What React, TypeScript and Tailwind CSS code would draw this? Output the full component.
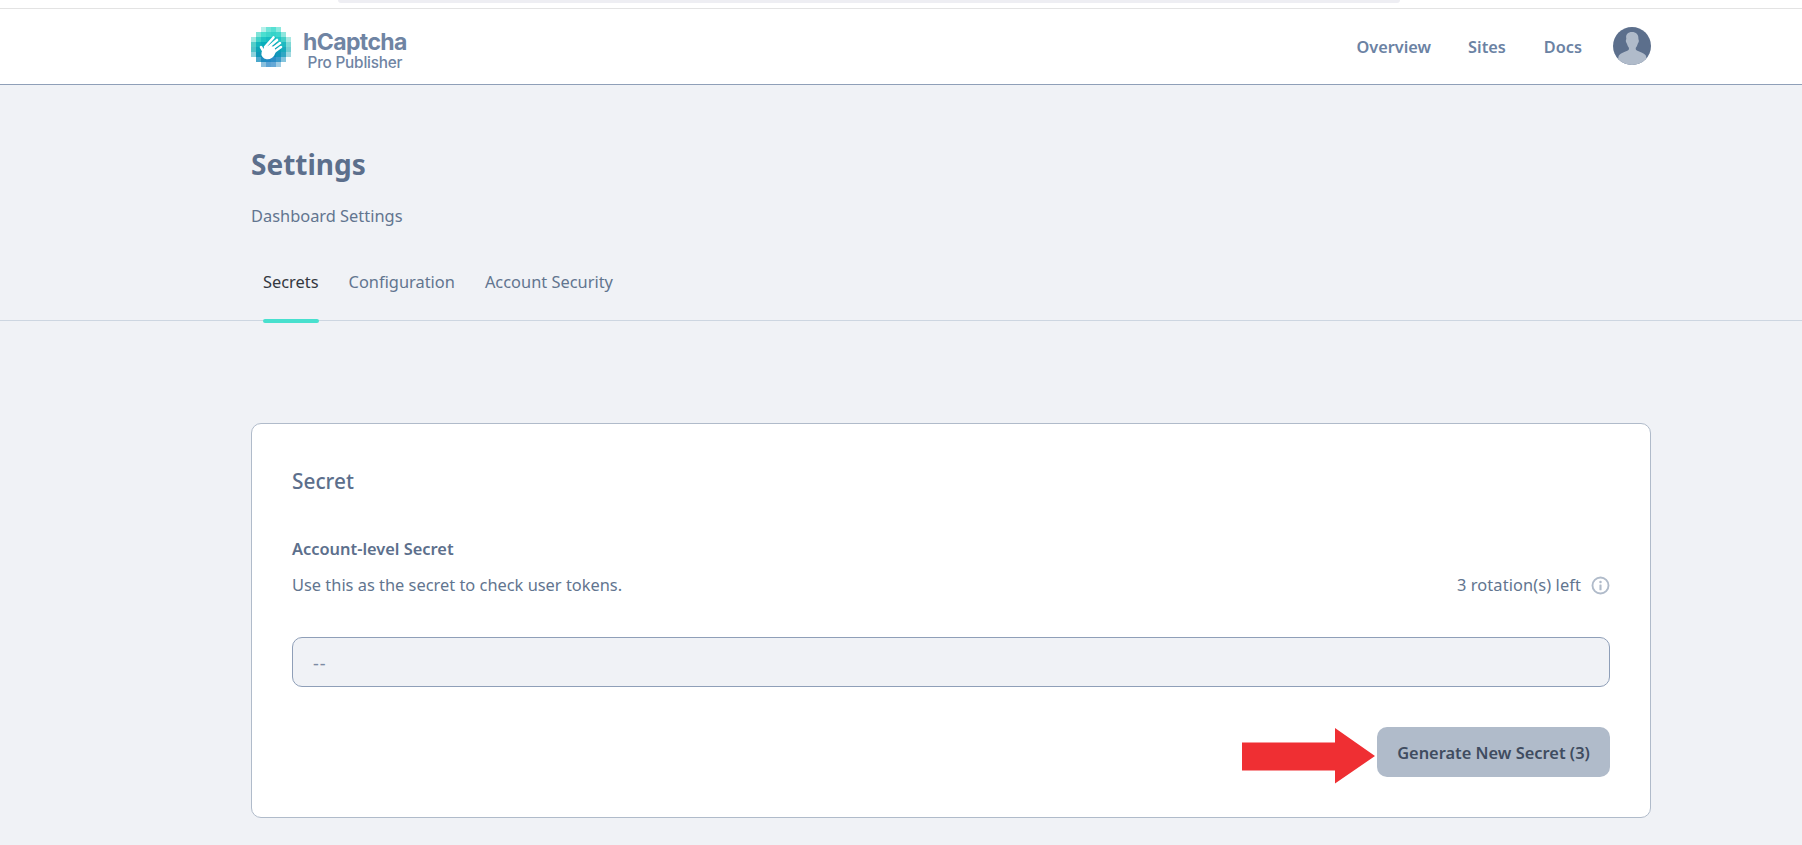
const logoRows: (string | null)[][] = [
  [null, null, "#b5f0ea", "#6fe4d8", "#56e0d3", "#8be9df", null, null],
  [null, "#7fe3d8", "#4adfd0", "#3ed7cb", "#35d3c9", "#3ed6cc", "#8fe6de", null],
  ["#a3e8e2", "#3fd2c8", "#20c4c4", "#16bdc2", "#16bcc2", "#22c6c6", "#46d0c9", "#a9e8e3"],
  ["#55cdc9", "#13b5be", "#08aebb", "#08aabb", "#0aa9bb", "#10b0bd", "#1fb9c1", "#7ed8d6"],
  ["#52c2c8", "#0ca5b7", "#07a0b6", "#069cb5", "#079bb5", "#0ba0b7", "#18aabc", "#71cdd2"],
  ["#8fd2dc", "#1198b8", "#0792b5", "#078eb6", "#0a8eb8", "#1397bb", "#30a6c3", "#a0d8e0"],
  [null, "#4ba8cc", "#1f8cc0", "#2289c4", "#2b8dc6", "#3b9bcb", "#84c4dd", null],
  [null, null, "#8ac0de", "#5ba3d4", "#65a8d6", "#a0cce3", null, null],
];

function Logo() {
  return (
    <svg width="40" height="40" viewBox="0 0 40 40" className="shrink-0">
      {logoRows.map((row, y) =>
        row.map((fill, x) =>
          fill ? <rect key={`${x}-${y}`} x={x * 5} y={y * 5} width="5" height="5" fill={fill} /> : null
        )
      )}
      <g stroke="#fff" strokeWidth="2.600" strokeLinecap="round" fill="none">
        <path d="M14 20l8.500-9.500" />
        <path d="M16.500 21l9.500-8" />
        <path d="M19 23.500l10-7.500" />
        <path d="M21 26.500l9-6.500" />
        <path d="M13.500 26l-3.500-6" />
      </g>
      <ellipse cx="17.500" cy="25.500" rx="7.500" ry="6.300" fill="#fff" transform="rotate(-35 17.500 25.500)" />
    </svg>
  );
}

function Avatar() {
  return (
    <svg width="38" height="38" viewBox="0 0 38 38" className="shrink-0">
      <defs>
        <clipPath id="avatar-clip">
          <circle cx="19" cy="19" r="19" />
        </clipPath>
      </defs>
      <g clipPath="url(#avatar-clip)">
        <rect width="38" height="38" fill="#5c6f8c" />
        <path
          fill="#b0bbca"
          d="M19 5c4 0 6.600 2.400 6.400 6.600 0 1.200.7 1.500.4 3-.3 1.300-.9 1.600-1.200 2.600-.4 1.500-1 2.700-1.800 3.600-.3 1.600.2 2.400 1.600 3 3.300 1.400 6.400 2.400 8 4.200 1 1.100 1.300 3.500 1.300 10H5c0-6.500.3-8.900 1.300-10 1.600-1.800 4.700-2.800 8-4.200 1.400-.6 1.900-1.400 1.600-3-.8-.9-1.400-2.100-1.800-3.600-.3-1-.9-1.300-1.200-2.600-.3-1.500.4-1.800.4-3C12.400 7.400 15 5 19 5z"
        />
      </g>
    </svg>
  );
}

export default function App() {
  return (
    <div className="h-[845px] overflow-hidden bg-[#f0f2f6] font-['Noto_Sans','Open_Sans',sans-serif] text-[#5c6f8c]">
      <div className="h-[9px] bg-white border-b border-[#e3e3e3] flex justify-start pl-[338px]">
        <div className="w-[1062px] h-[3px] bg-[#eeeef3] rounded-b-md" />
      </div>
      <header className="h-[76px] bg-white border-b border-[#8f9fb8]">
        <div className="w-[1400px] ml-[251px] h-full flex items-center justify-between pb-[2px]">
          <div className="flex items-center gap-[12px] pt-[2px]">
            <Logo />
            <div className="flex flex-col items-center pt-[6px]">
              <span className="text-[23px] leading-[24px] font-bold text-[#6f84a3] font-['Inter',sans-serif] tracking-[-0.6px]">hCaptcha</span>
              <span className="mt-[1px] text-[15.300px] leading-[15px] font-medium text-[#6f84a3] font-['Inter',sans-serif] tracking-[-0.2px]">Pro Publisher</span>
            </div>
          </div>
          <nav className="flex items-center text-[16.300px] font-semibold text-[#6b82a3]">
            <a className="mr-[37px] pt-[3px]">Overview</a>
            <a className="mr-[38px] pt-[3px]">Sites</a>
            <a className="mr-[31px] pt-[3px]">Docs</a>
            <Avatar />
          </nav>
        </div>
      </header>

      <section className="h-[236px] border-b border-[#cdd6e1] relative">
        <div className="w-[1400px] ml-[251px]">
          <h1 className="pt-[59px] text-[28px] leading-[40px] font-bold text-[#5c6f8c]">Settings</h1>
          <p className="mt-[20px] text-[16.400px] leading-[24px] text-[#62758f]">Dashboard Settings</p>
          <div className="mt-[42px] flex text-[16.400px] leading-[24px] text-[#62758f]">
            <div className="ml-[12px] relative text-[#33383f]">
              Secrets
              <span className="absolute left-0 right-0 top-[49px] h-[4px] rounded-full bg-[#48e0ce]" />
            </div>
            <div className="ml-[30px]">Configuration</div>
            <div className="ml-[30px]">Account Security</div>
          </div>
        </div>
      </section>

      <main className="w-[1400px] ml-[251px] mt-[102px] bg-white border border-[#b0bbca] rounded-[10px] h-[395px] px-[40px] pt-[43px]">
        <h2 className="text-[20.800px] leading-[28px] font-medium text-[#5c6f8c]">Secret</h2>
        <h3 className="mt-[42px] text-[16.400px] leading-[24px] font-semibold text-[#5c6f8c]">Account-level Secret</h3>
        <div className="mt-[12px] flex items-center justify-between text-[16.400px] leading-[24px] text-[#62758f]">
          <span>Use this as the secret to check user tokens.</span>
          <span className="flex items-center gap-[10px] tracking-[0.1px]">
            3 rotation(s) left
            <svg width="19" height="19" viewBox="0 0 18 18" fill="none">
              <circle cx="9" cy="9" r="7.600" stroke="#b0bbca" strokeWidth="1.800" />
              <circle cx="9" cy="5.600" r="1.200" fill="#b0bbca" />
              <rect x="8" y="8" width="2" height="5.500" rx="0.500" fill="#b0bbca" />
            </svg>
          </span>
        </div>
        <div className="mt-[40px] h-[50px] bg-[#f0f2f6] border border-[#8f9fb8] rounded-[10px] flex items-center pl-[20px] pt-[2px] text-[18px] tracking-[1px] text-[#7c8ba3]">
          --
        </div>
        <div className="mt-[40px] flex items-start justify-end">
          <svg width="133" height="56" viewBox="0 0 133 56" className="mr-[2px] mt-[1px]">
            <path fill="#ef2f33" d="M0 14.500h93V0l40 28-40 27.500V42.500H0z" />
          </svg>
          <button className="w-[233px] h-[50px] pt-[2px] rounded-[10px] bg-[#b0bbca] text-[16.400px] font-semibold text-[#3f4c60]">
            Generate New Secret (3)
          </button>
        </div>
      </main>
    </div>
  );
}
